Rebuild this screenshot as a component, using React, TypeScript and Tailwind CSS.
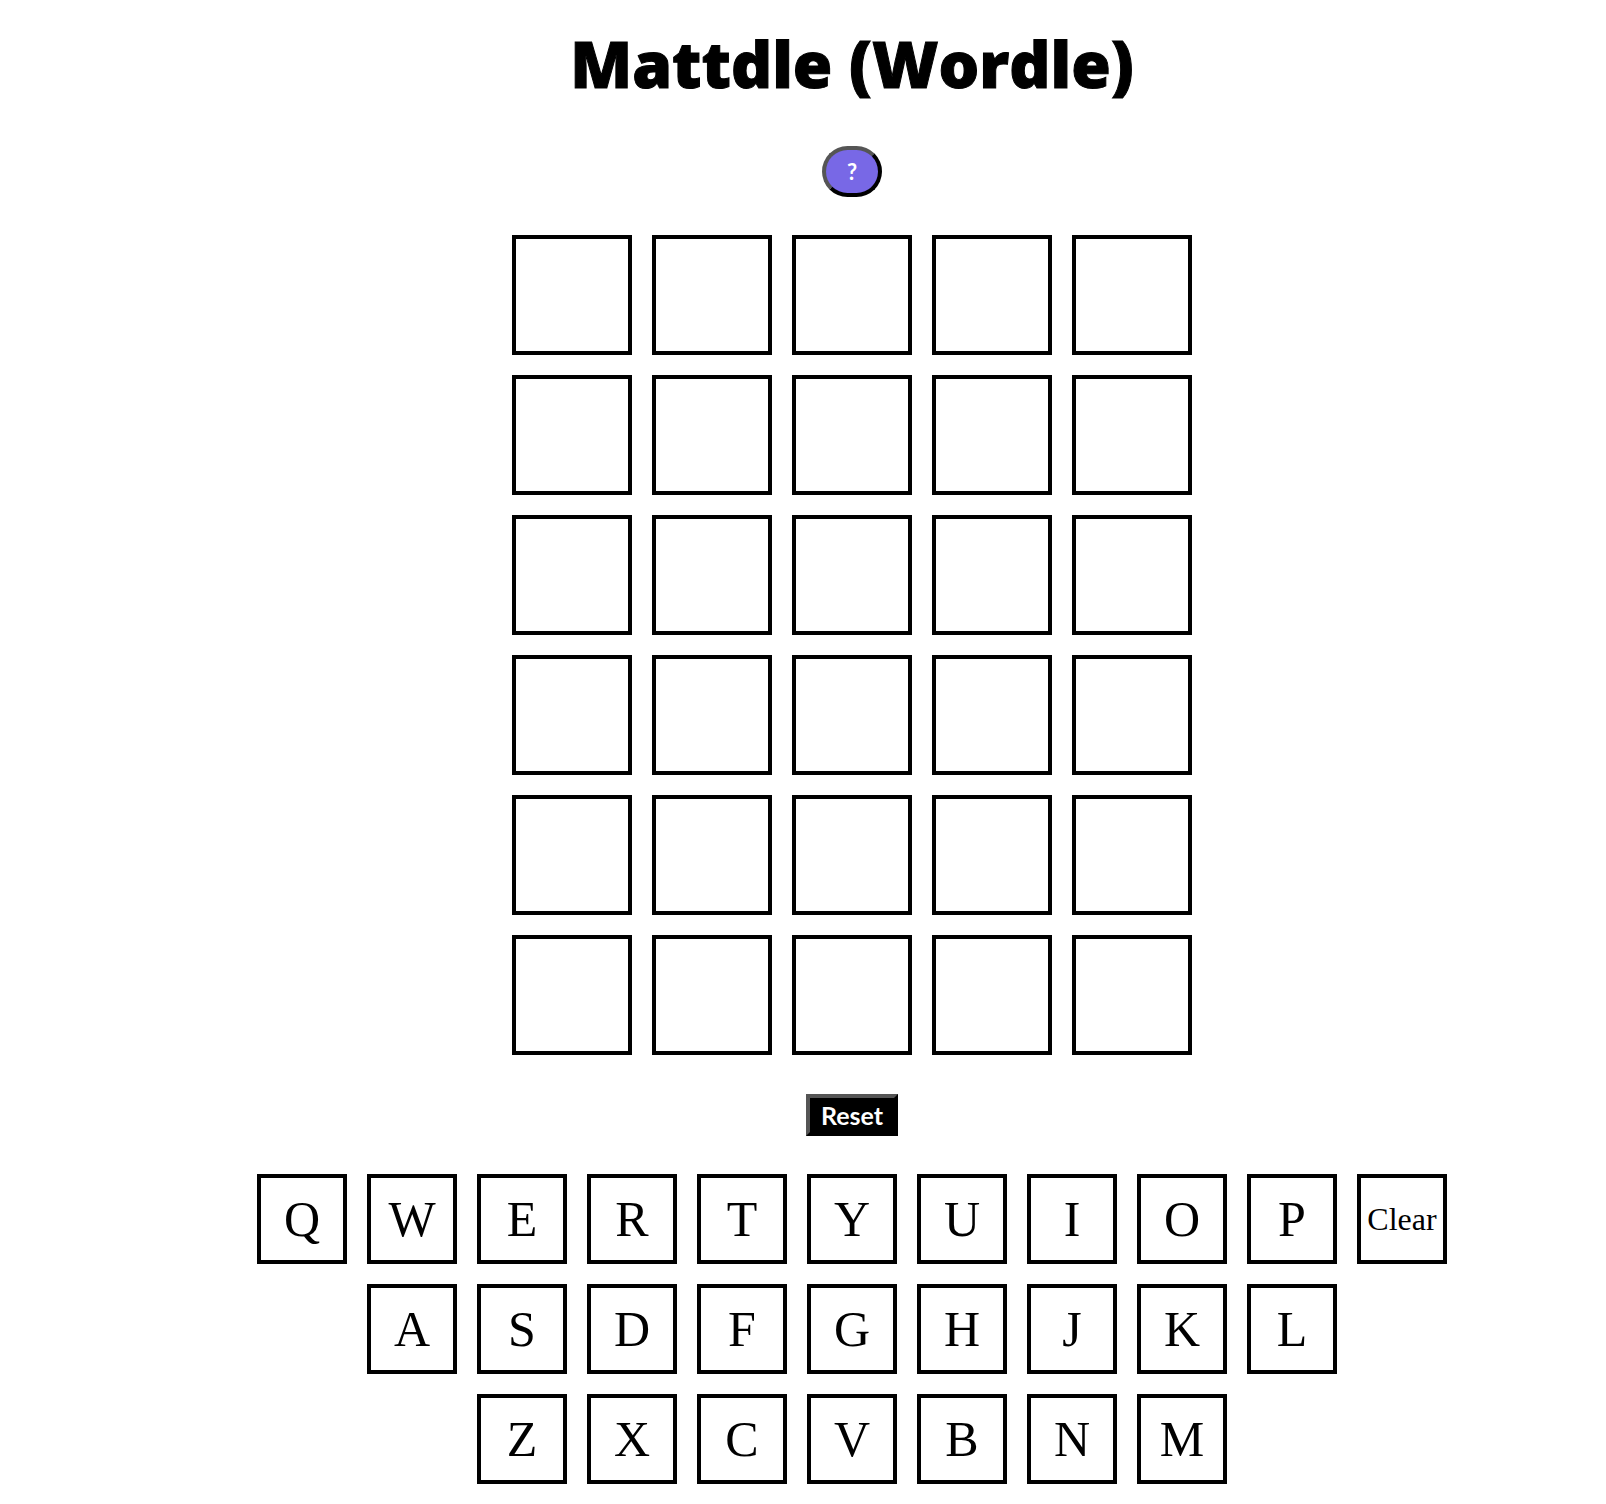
import { useState } from "react";

const ROWS = 6;
const COLUMNS = 5;
const KEY_ROWS = [
  ["Q", "W", "E", "R", "T", "Y", "U", "I", "O", "P", "Clear"],
  ["A", "S", "D", "F", "G", "H", "J", "K", "L"],
  ["Z", "X", "C", "V", "B", "N", "M"],
];

function Tile({ letter }: { letter: string }) {
  return (
    <div className="flex size-[120px] items-center justify-center border-4 border-black text-[50px] leading-none">
      {letter}
    </div>
  );
}

function Key({ label, onPress }: { label: string; onPress: () => void }) {
  return (
    <button
      type="button"
      onClick={onPress}
      className={`flex size-[90px] cursor-pointer items-center justify-center border-4 border-black leading-none ${
        label === "Clear" ? "text-[32px]" : "text-[50px]"
      }`}
    >
      {label}
    </button>
  );
}

export default function App() {
  const [letters, setLetters] = useState("");

  const press = (label: string) =>
    setLetters((current) =>
      label === "Clear"
        ? current.slice(0, -1)
        : (current + label).slice(0, ROWS * COLUMNS),
    );

  return (
    <main className="flex min-h-screen flex-col items-center bg-white pt-[22px] pb-5 pl-[98px] font-['Liberation_Serif',serif] text-black">
      <h1 className="text-center font-['Open_Sans',sans-serif] text-[64px] leading-[84px] font-extrabold [-webkit-text-stroke:1px_black]">
        Mattdle (Wordle)
      </h1>

      <button
        type="button"
        className="mt-10 h-[51px] w-[60px] cursor-pointer rounded-full border-4 border-t-[#555] border-r-black border-b-black border-l-[#555] bg-[#7868e6] font-['Lato',sans-serif] text-[22px] leading-none font-bold text-white"
      >
        ?
      </button>

      <div className="mt-[38px] grid grid-cols-5 gap-5">
        {Array.from({ length: ROWS * COLUMNS }, (_, i) => (
          <Tile key={i} letter={letters[i] ?? ""} />
        ))}
      </div>

      <button
        type="button"
        onClick={() => setLetters("")}
        className="mt-[39px] h-[42px] w-[92px] cursor-pointer border-4 border-t-[#555] border-r-black border-b-black border-l-[#555] bg-black font-['Lato',sans-serif] text-[25px] leading-none font-bold text-white"
      >
        Reset
      </button>

      <div className="mt-[38px] flex flex-col items-center gap-5">
        {KEY_ROWS.map((row) => (
          <div key={row[0]} className="flex gap-5">
            {row.map((label) => (
              <Key key={label} label={label} onPress={() => press(label)} />
            ))}
          </div>
        ))}
      </div>
    </main>
  );
}
